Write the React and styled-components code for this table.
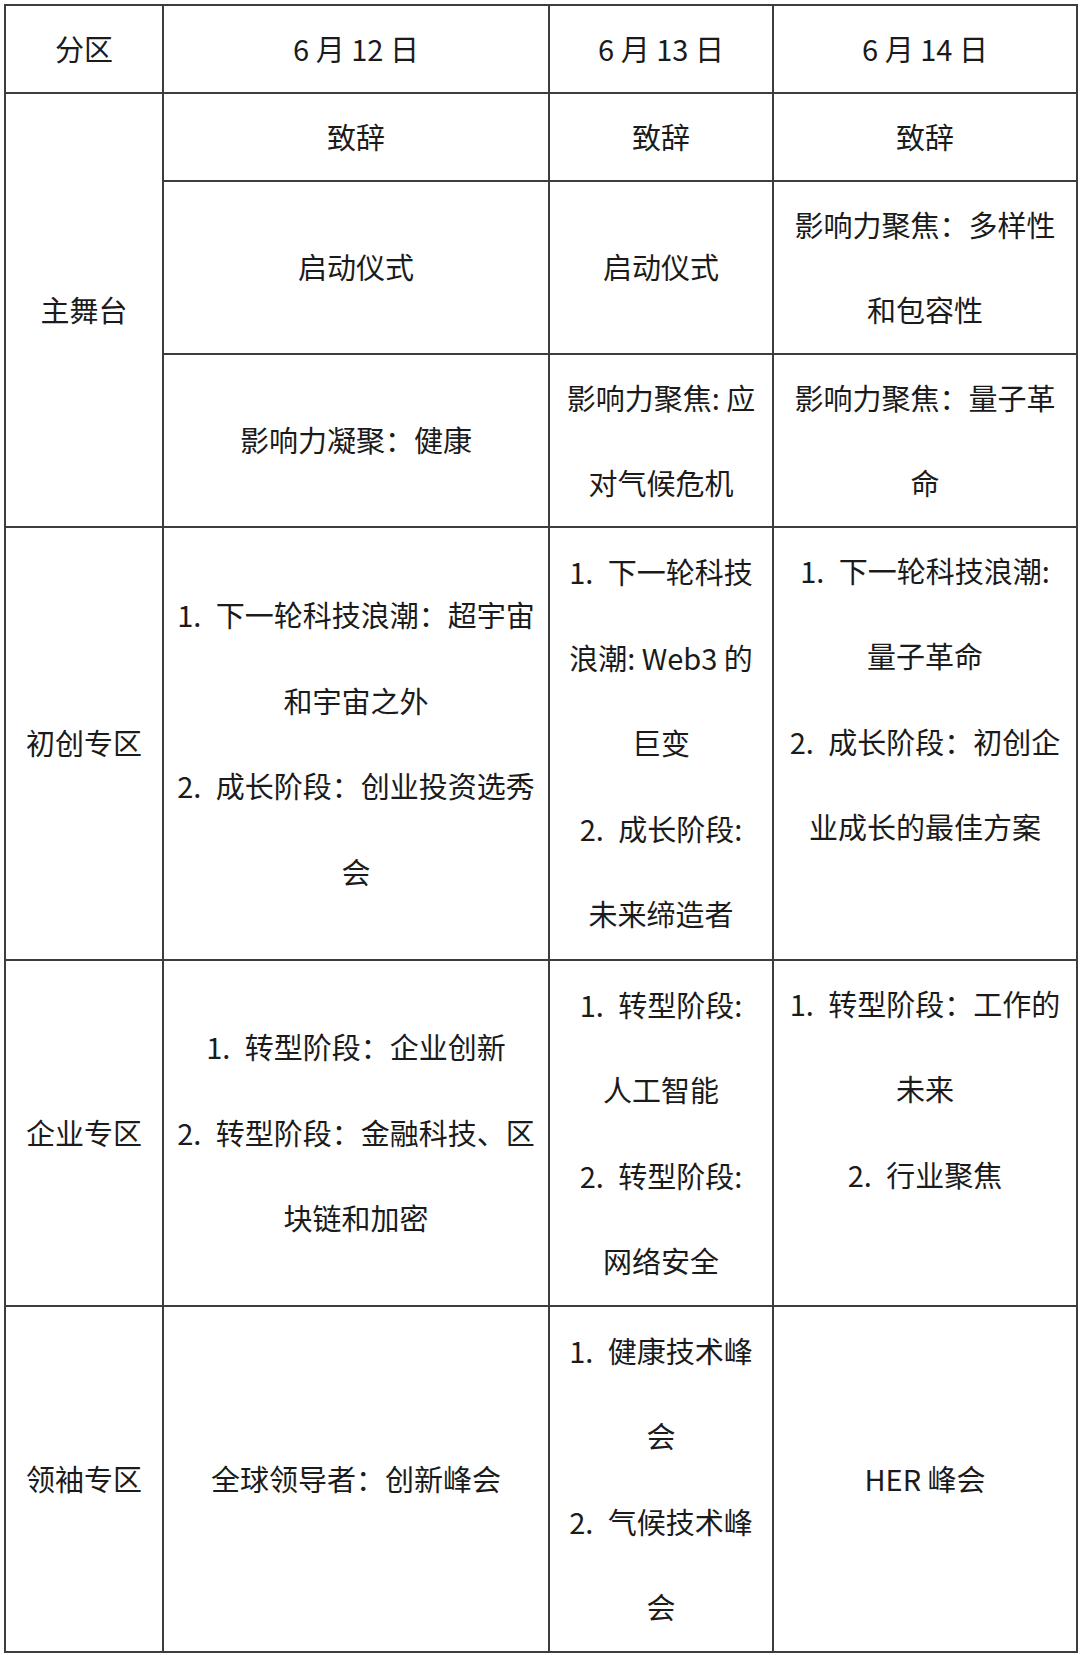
import React from 'react';
import styled, { createGlobalStyle } from 'styled-components';

const GlobalStyle = createGlobalStyle`
  html, body {
    margin: 0;
    padding: 0;
    background: #ffffff;
  }
  body {
    font-family: "Noto Sans CJK SC", "Noto Sans", sans-serif;
    color: #1b1b1b;
  }
`;

const Page = styled.div`
  padding: 4px;
  width: 1072px;
`;

const Table = styled.table`
  width: 1072px;
  border-collapse: collapse;
  table-layout: fixed;
  border: 2px solid #3d3d3d;
`;

const Row = styled.tr`
  height: ${(props) => props.h}px;
`;

const Cell = styled.td`
  border: 2px solid #3d3d3d;
  padding: 0 4px;
  text-align: center;
  vertical-align: ${(props) => (props.$top ? 'top' : 'middle')};
  font-size: 29px;
  line-height: 85.5px;
  font-weight: 400;
`;

const Line = styled.span`
  display: block;
  white-space: nowrap;
`;

const columns = [158, 386, 224, 304];

const rows = [
  { h: 88, cells: [['分区'], ['6 月 12 日'], ['6 月 13 日'], ['6 月 14 日']] },
  { h: 87, cells: [{ span: 3, lines: ['主舞台'] }, ['致辞'], ['致辞'], ['致辞']] },
  { h: 173, cells: [['启动仪式'], ['启动仪式'], ['影响力聚焦：多样性', '和包容性']] },
  { h: 173, cells: [['影响力凝聚：健康'], ['影响力聚焦: 应', '对气候危机'], ['影响力聚焦：量子革', '命']] },
  {
    h: 433,
    cells: [
      ['初创专区'],
      ['1.  下一轮科技浪潮：超宇宙', '和宇宙之外', '2.  成长阶段：创业投资选秀', '会'],
      ['1.  下一轮科技', '浪潮: Web3 的', '巨变', '2.  成长阶段:', '未来缔造者'],
      { top: true, lines: ['1.  下一轮科技浪潮:', '量子革命', '2.  成长阶段：初创企', '业成长的最佳方案'] },
    ],
  },
  {
    h: 346,
    cells: [
      ['企业专区'],
      ['1.  转型阶段：企业创新', '2.  转型阶段：金融科技、区', '块链和加密'],
      ['1.  转型阶段:', '人工智能', '2.  转型阶段:', '网络安全'],
      { top: true, lines: ['1.  转型阶段：工作的', '未来', '2.  行业聚焦'] },
    ],
  },
  {
    h: 346,
    cells: [
      ['领袖专区'],
      ['全球领导者：创新峰会'],
      ['1.  健康技术峰', '会', '2.  气候技术峰', '会'],
      ['HER 峰会'],
    ],
  },
];

const App = () => (
  <Page>
    <GlobalStyle />
    <Table>
      <colgroup>
        {columns.map((w, i) => (
          <col key={i} style={{ width: w }} />
        ))}
      </colgroup>
      <tbody>
        {rows.map((row, r) => (
          <Row key={r} h={row.h}>
            {row.cells.map((cell, c) => {
              const plain = Array.isArray(cell);
              const lines = plain ? cell : cell.lines;
              return (
                <Cell key={c} rowSpan={plain ? 1 : cell.span || 1} $top={!plain && cell.top}>
                  {lines.map((text, i) => (
                    <Line key={i}>{text.replace(/ {2}/g, '\u2002')}</Line>
                  ))}
                </Cell>
              );
            })}
          </Row>
        ))}
      </tbody>
    </Table>
  </Page>
);

export default App;
